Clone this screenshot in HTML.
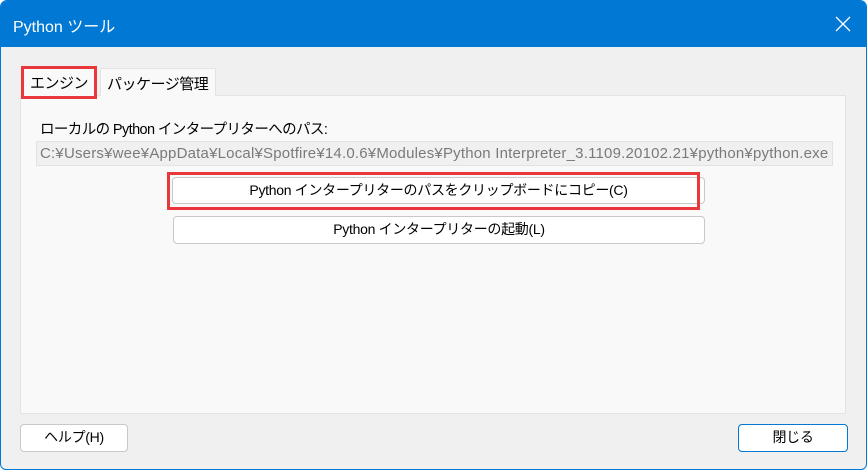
<!DOCTYPE html><html><head><meta charset="utf-8"><style>
*{box-sizing:border-box;margin:0;padding:0}
body{width:868px;height:471px;overflow:hidden;background:#fff;font-family:"Liberation Sans","Noto Sans CJK JP",sans-serif;font-size:14px;color:#000;position:relative}
.win{position:absolute;left:0;top:0;width:867px;height:470px;border:1px solid #0078d4;border-radius:7px 7px 6px 6px;background:#f0f0f0;overflow:hidden}
.title{position:absolute;left:0;top:0;width:100%;height:46px;background:#0078d4;color:#fff;font-size:16px;padding:12px 0 0 12px}
.x{position:absolute;right:14px;top:14px;width:18px;height:18px}
.abs{position:absolute;white-space:nowrap}
.panel{left:19px;top:94px;width:826px;height:319px;background:#f9f9f9;border:1px solid #e4e4e4}
.tab{top:67px;height:28px;background:#f9f9f9;border:1px solid #e4e4e4;border-bottom:none;padding:4px 0 0 6px;font-size:15px;letter-spacing:-0.5px}
.btn{background:#fff;border:1px solid #c8c8c8;border-radius:4px;text-align:center;font-size:14px;line-height:25px;letter-spacing:-0.3px}
.red{border:3px solid #e8383c}
</style></head><body>
<div class="win">
<div class="title">Python ツール
<svg class="x" viewBox="0 0 18 18"><path d="M2 2L16 16M16 2L2 16" stroke="#fff" stroke-width="1.3"/></svg></div>
<div class="abs panel"></div>
<div class="abs tab" style="left:99px;width:116px;">パッケージ管理</div>
<div class="abs tab" style="left:22px;width:72px;top:66px;height:30px;padding-left:6px">エンジン</div>
<div class="abs red" style="left:20px;top:65px;width:76px;height:33px"></div>
<div class="abs" style="left:39px;top:117px;font-size:14.5px;letter-spacing:-0.6px">ローカルの Python インタープリターへのパス:</div>
<div class="abs" style="left:35px;top:140px;width:797px;height:25px;background:#f0f0f0;border:1px solid #e2e2e2;color:#7a7a7a;font-size:15px;line-height:23px;padding-left:3px;overflow:hidden;letter-spacing:0.2px">C:¥Users¥wee¥AppData¥Local¥Spotfire¥14.0.6¥Modules¥Python Interpreter_3.1109.20102.21¥python¥python.exe</div>
<div class="abs btn" style="left:171px;top:176px;width:533px;height:27px">Python インタープリターのパスをクリップボードにコピー(C)</div>
<div class="abs red" style="left:166px;top:171px;width:533px;height:38px"></div>
<div class="abs btn" style="left:172px;top:215px;width:532px;height:28px">Python インタープリターの起動(L)</div>
<div class="abs btn" style="left:19px;top:423px;width:108px;height:28px">ヘルプ(H)</div>
<div class="abs btn" style="left:737px;top:423px;width:110px;height:28px;border:1.5px solid #0078d4">閉じる</div>
</div>
</body></html>
